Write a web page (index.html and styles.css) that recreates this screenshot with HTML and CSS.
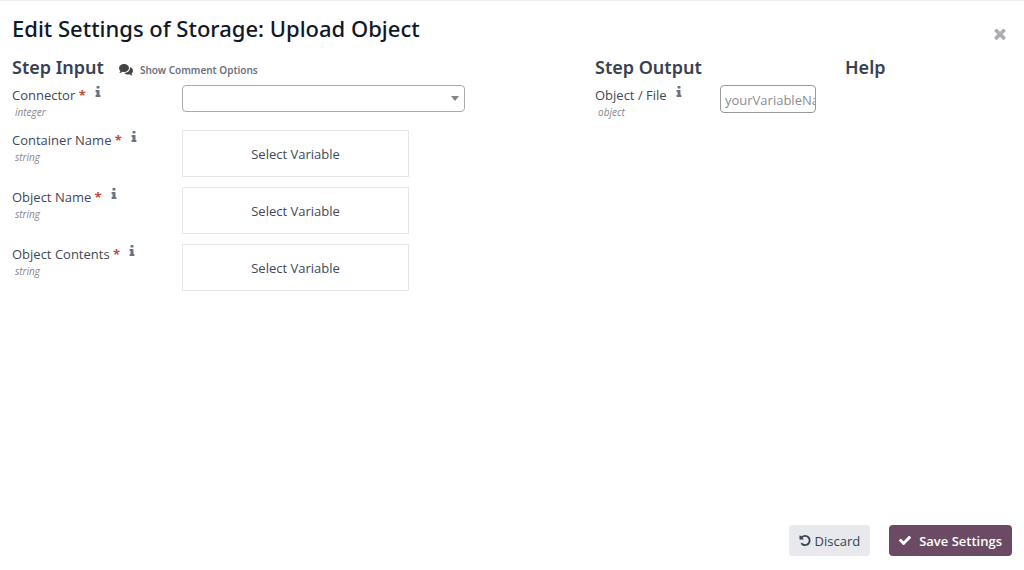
FILE: index.html
```html
<!DOCTYPE html>
<html lang="en">
<head>
<meta charset="utf-8">
<meta name="viewport" content="width=device-width, initial-scale=1">
<title>Edit Settings of Storage: Upload Object</title>
<link rel="stylesheet" href="styles.css">
</head>
<body>
<svg class="sprite" aria-hidden="true">
  <symbol id="info" viewBox="576 128 640 1408"><path d="M1216 1344v128q0 26-19 45t-45 19h-512q-26 0-45-19t-19-45v-128q0-26 19-45t45-19h64v-384h-64q-26 0-45-19t-19-45v-128q0-26 19-45t45-19h384q26 0 45 19t19 45v576h64q26 0 45 19t19 45zm-128-1152v192q0 26-19 45t-45 19h-256q-26 0-45-19t-19-45v-192q0-26 19-45t45-19h256q26 0 45 19t19 45z"/></symbol>
</svg>
<form class="dialog">
  <header class="dialog-header">
    <h1 class="title">Edit Settings of Storage: Upload Object</h1>
    <button class="close" type="button" aria-label="Close"><svg viewBox="302 302 1188 1252"><path d="M1490 1322q0 40-28 68l-136 136q-28 28-68 28t-68-28l-294-294-294 294q-28 28-68 28t-68-28l-136-136q-28-28-28-68t28-68l294-294-294-294q-28-28-28-68t28-68l136-136q28-28 68-28t68 28l294 294 294-294q28-28 68-28t68 28l136 136q28 28 28 68t-28 68l-294 294 294 294q28 28 28 68z"/></svg></button>
  </header>
  <main class="columns">
    <section class="column">
      <div class="column-head">
        <h2 class="heading">Step Input</h2>
        <button class="comments" type="button">
          <svg viewBox="0 0 14 12"><path d="M5 0C7.800 0 10 1.700 10 4S7.800 8 5 8C4.400 8 3.800 7.900 3.300 7.800 2.500 8.500 1.500 9 .3 9.100 .8 8.500 1.300 7.800 1.400 7 .5 6.200 0 5.200 0 4 0 1.700 2.200 0 5 0Z"/><path d="M11 3.200C12.800 3.800 14 5.100 14 6.700 14 7.800 13.500 8.700 12.600 9.400 12.700 10.200 13.200 11 13.700 11.600 12.500 11.500 11.500 11 10.700 10.300 8.600 10.800 6.500 10.200 5.300 8.900 8.700 8.800 11.200 6.800 11 3.200Z"/></svg>
          Show Comment Options
        </button>
      </div>
      <div class="fields">
        <div class="field">
          <div class="label-block"><label for="connector">Connector <b class="required">*</b></label><svg class="info"><use href="#info"/></svg><small class="type">integer</small></div>
          <div class="select-wrap"><select class="select" id="connector"><option></option></select></div>
        </div>
        <div class="field">
          <div class="label-block"><label for="container">Container Name <b class="required">*</b></label><svg class="info"><use href="#info"/></svg><small class="type">string</small></div>
          <button class="variable" id="container" type="button">Select Variable</button>
        </div>
        <div class="field">
          <div class="label-block"><label for="object-name">Object Name <b class="required">*</b></label><svg class="info"><use href="#info"/></svg><small class="type">string</small></div>
          <button class="variable" id="object-name" type="button">Select Variable</button>
        </div>
        <div class="field">
          <div class="label-block"><label for="contents">Object Contents <b class="required">*</b></label><svg class="info"><use href="#info"/></svg><small class="type">string</small></div>
          <button class="variable" id="contents" type="button">Select Variable</button>
        </div>
      </div>
    </section>
    <section class="column">
      <div class="column-head"><h2 class="heading">Step Output</h2></div>
      <div class="field field-output">
        <div class="label-block"><label for="output">Object / File</label><svg class="info"><use href="#info"/></svg><small class="type">object</small></div>
        <input class="text-input" id="output" type="text" placeholder="yourVariableName">
      </div>
    </section>
    <section class="column">
      <div class="column-head"><h2 class="heading">Help</h2></div>
    </section>
  </main>
  <footer class="dialog-footer">
    <button class="btn btn-discard" type="button"><svg viewBox="128 128 1536 1536"><path d="M1664 896q0 156-61 298t-164 245-245 164-298 61q-172 0-327-72.500t-264-204.500q-7-10-6.500-22.500t8.500-20.500l137-138q10-9 25-9 16 2 23 12 73 95 179 147t225 52q104 0 198.500-40.500t163.500-109.500 109.500-163.500 40.500-198.500-40.500-198.500-109.500-163.500-163.500-109.500-198.500-40.500q-98 0-188 35.500t-160 101.500l137 138q31 30 14 69-17 40-59 40h-448q-26 0-45-19t-19-45v-448q0-42 40-59 39-17 69 14l130 129q107-101 244.500-156.500t284.500-55.500q156 0 298 61t245 164 164 245 61 298z"/></svg>Discard</button>
    <button class="btn btn-save" type="submit"><svg viewBox="121 334 1550 1188"><path d="M1671 566q0 40-28 68l-724 724-136 136q-28 28-68 28t-68-28l-136-136-362-362q-28-28-28-68t28-68l136-136q28-28 68-28t68 28l294 295 656-657q28-28 68-28t68 28l136 136q28 28 28 68z"/></svg>Save Settings</button>
  </footer>
</form>
</body>
</html>
```
FILE: styles.css
```css
* { box-sizing: border-box; }
body {
  margin: 0;
  background: #fff;
  color: #414858;
  font: 13px/18px "Open Sans", "Noto Sans", sans-serif;
}
button, input, select { font: inherit; color: inherit; }
button { cursor: pointer; }
svg { fill: currentColor; flex: none; }
.sprite { display: none; }
.dialog {
  display: flex;
  flex-direction: column;
  min-height: 100vh;
  border-top: 1px solid #eee;
}
.dialog-header {
  display: flex;
  justify-content: space-between;
  align-items: flex-start;
  padding: 11px 12px 7px;
}
.title {
  margin: 0;
  color: #111827;
  font: 500 22px/32px "Noto Sans", "Open Sans", sans-serif;
}
.close {
  display: flex;
  margin-top: 10px;
  padding: 6px;
  border: 0;
  background: none;
  color: #acaeb4;
}
.close svg { width: 12px; height: 12px; }
.columns {
  display: grid;
  flex: 1;
  grid-template-columns: 583fr 250fr 191fr;
}
.column { padding: 0 12px; min-width: 0; }
.column-head {
  display: flex;
  align-items: center;
  gap: 15px;
  height: 32px;
  padding-bottom: 4px;
}
.heading {
  margin: 0;
  color: #374151;
  font: 600 18px/28px "Noto Sans", "Open Sans", sans-serif;
}
.comments {
  display: flex;
  align-items: center;
  gap: 7px;
  margin-top: 6px;
  padding: 0;
  border: 0;
  background: none;
  color: #6b7280;
  font: 600 10px/16px "Noto Sans", "Open Sans", sans-serif;
}
.comments svg { width: 14px; height: 12px; color: #444; }
.fields { display: flex; flex-direction: column; gap: 10px; }
.field {
  display: grid;
  grid-template-columns: 170px minmax(0, 1fr);
  align-items: start;
}
.field-output { grid-template-columns: 125px 96px; }
.label-block { min-height: 35px; padding-top: 1px; }
.required { color: #c9473c; }
.info { width: 6px; height: 11px; margin-left: 9px; vertical-align: 3px; color: #6b7280; }
.type {
  display: block;
  padding-left: 3px;
  color: #85878d;
  font-size: 10px;
  line-height: 16px;
  font-style: italic;
}
.select-wrap { position: relative; width: 283px; max-width: 100%; }
.select-wrap::after {
  content: "";
  position: absolute;
  top: 11px;
  right: 6px;
  border: 4px solid transparent;
  border-top: 5px solid #858585;
  border-bottom: 0;
  pointer-events: none;
}
.select {
  display: block;
  width: 100%;
  height: 27px;
  border: 1px solid #aaa;
  border-radius: 4px;
  background: #fff;
  appearance: none;
}
.variable {
  width: 227px;
  max-width: 100%;
  height: 47px;
  border: 1px solid #e5e7eb;
  background: #fff;
}
.text-input {
  width: 100%;
  height: 28px;
  padding: 2px 0 0 4px;
  border: 1px solid #999;
  border-radius: 4px;
  background: #fff;
}
.text-input::placeholder { color: #8b8d93; opacity: 1; }
.dialog-footer {
  display: flex;
  justify-content: flex-end;
  gap: 19px;
  padding: 8px 12px 14px;
}
.btn {
  display: flex;
  align-items: center;
  height: 31px;
  padding: 0 10px;
  border: 0;
  border-radius: 4px;
  font-weight: 500;
}
.btn svg { width: 12px; height: 11px; }
.btn-discard { gap: 4px; background: #e7e9ed; color: #374151; }
.btn-save { gap: 8px; background: #6b4b63; color: #fff; font-weight: 600; }
```
